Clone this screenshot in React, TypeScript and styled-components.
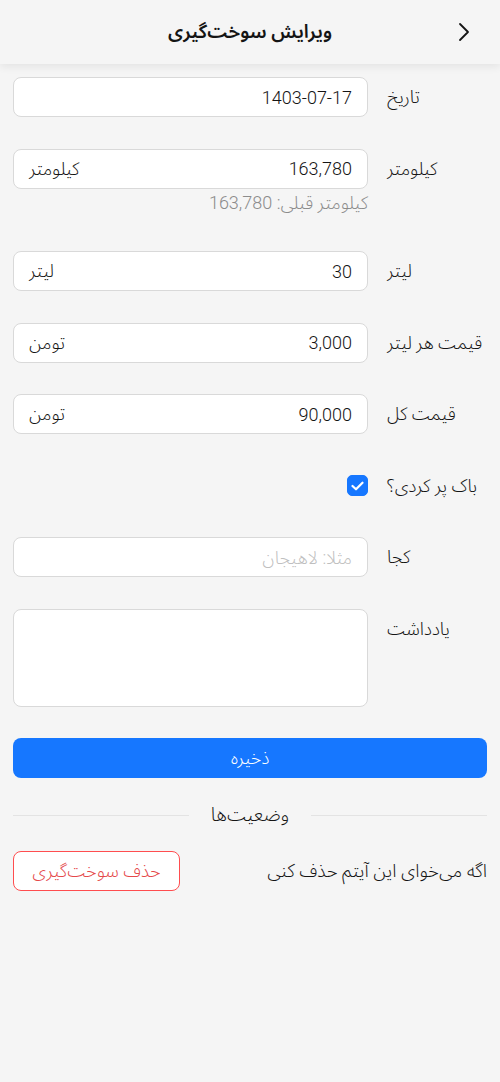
import React, { useState } from 'react'
import styled, { createGlobalStyle } from 'styled-components'

const GlobalStyle = createGlobalStyle`
  body {
    margin: 0;
    background-color: #f5f5f5;
    font-family: Roboto, "Noto Sans Arabic", sans-serif;
    color: #1f1f1f;
  }
  * { box-sizing: border-box; }
`

const Page = styled.div`
	direction: rtl;
	min-height: 1082px;
	background: #f5f5f5;
`

const Header = styled.header`
	height: 64px;
	display: flex;
	align-items: center;
	justify-content: center;
	position: relative;
	background: #f5f5f5;
	box-shadow: 0 3px 8px rgba(0, 0, 0, 0.07);
`

const Title = styled.h1`
	margin: 0;
	font-size: 19px;
	line-height: 28px;
	font-weight: 600;
	color: #141414;
`

const BackButton = styled.button`
	position: absolute;
	right: 22px;
	top: 18px;
	width: 28px;
	height: 28px;
	display: flex;
	align-items: center;
	justify-content: center;
	border: 0;
	padding: 0;
	background: transparent;
	color: #141414;
`

const Form = styled.form`
	padding: 13px 13px 0;
`

const Item = styled.div`
	display: grid;
	grid-template-columns: 100px 1fr;
	column-gap: 19px;
	margin-bottom: 31.5px;
`

const Label = styled.label`
	height: 40px;
	line-height: 40px;
	font-size: 18px;
	font-weight: 300;
	color: #141414;
	text-align: left;
	white-space: nowrap;
`

const Control = styled.div`
	display: flex;
	flex-direction: column;
`

const InputBox = styled.div`
	height: 40px;
	display: flex;
	align-items: center;
	gap: 8px;
	padding: 0 15px;
	background: #fff;
	border: 1px solid #d9d9d9;
	border-radius: 8px;
`

const Input = styled.input`
	flex: 1;
	min-width: 0;
	border: 0;
	outline: none;
	padding: 0;
	background: transparent;
	font-family: Roboto, "Noto Sans Arabic", sans-serif;
	font-size: 18px;
	font-weight: 300;
	color: #141414;
	direction: rtl;
	text-align: right;
	&::placeholder {
		color: #bfbfbf;
		font-weight: 300;
	}
`

const Suffix = styled.span`
	font-size: 18px;
	font-weight: 300;
	line-height: 24px;
	color: #141414;
`

const Hint = styled.div`
	height: 31px;
	line-height: 27px;
	font-size: 18px;
	font-weight: 300;
	color: #8c8c8c;
`

const CheckRow = styled.div`
	height: 40px;
	display: flex;
	align-items: center;
`

const CheckBox = styled.span<{ $on: boolean }>`
	width: 21px;
	height: 21px;
	border-radius: 5px;
	background: ${(p) => (p.$on ? '#1677ff' : '#fff')};
	border: 1px solid ${(p) => (p.$on ? '#1677ff' : '#d9d9d9')};
	display: flex;
	align-items: center;
	justify-content: center;
	cursor: pointer;
`

const TextArea = styled.textarea`
	height: 98px;
	width: 100%;
	resize: none;
	padding: 8px 15px;
	background: #fff;
	border: 1px solid #d9d9d9;
	border-radius: 8px;
	font-family: Roboto, "Noto Sans Arabic", sans-serif;
	font-size: 18px;
	font-weight: 300;
	outline: none;
	display: block;
`

const SaveButton = styled.button`
	width: 100%;
	height: 40px;
	border: 0;
	border-radius: 8px;
	background: #1677ff;
	color: #fff;
	font-family: Roboto, "Noto Sans Arabic", sans-serif;
	font-size: 18px;
	font-weight: 300;
	line-height: 24px;
`

const DividerWrap = styled.div`
	padding: 0 13px;
`

const Divider = styled.div`
	display: flex;
	align-items: center;
	margin: 25px 0 24px;
	font-size: 19px;
	font-weight: 300;
	color: #141414;
	height: 24px;
	&::before,
	&::after {
		content: '';
		flex: 1;
		border-top: 1px solid #e3e3e3;
	}
`

const DividerText = styled.span`
	padding: 0 22px;
	line-height: 24px;
`

const DangerRow = styled.div`
	display: flex;
	align-items: center;
	justify-content: space-between;
	padding: 0 13px;
`

const DangerText = styled.span`
	font-size: 18.5px;
	font-weight: 300;
	line-height: 24px;
	color: #141414;
`

const DangerButton = styled.button`
	height: 40px;
	width: 167px;
	border: 1px solid #ff4d4f;
	border-radius: 8px;
	background: #fff;
	color: #e5484a;
	font-family: Roboto, "Noto Sans Arabic", sans-serif;
	font-size: 18px;
	font-weight: 300;
	line-height: 24px;
`

const fields = [
	{ label: 'تاریخ', value: '1403-07-17' },
	{ label: 'کیلومتر', value: '163,780', suffix: 'کیلومتر', hint: 'کیلومتر قبلی: 163,780' },
	{ label: 'لیتر', value: '30', suffix: 'لیتر' },
	{ label: 'قیمت هر لیتر', value: '3,000', suffix: 'تومن' },
	{ label: 'قیمت کل', value: '90,000', suffix: 'تومن' },
]

const App: React.FC = () => {
	const [full, setFull] = useState(true)

	return (
		<>
			<GlobalStyle />
			<Page>
				<Header>
					<BackButton type='button' aria-label='بازگشت'>
						<svg width='14' height='20' viewBox='0 0 14 20' fill='none'>
							<path d='M3 2 L11 10 L3 18' stroke='#141414' strokeWidth='1.8' strokeLinecap='round' strokeLinejoin='round' />
						</svg>
					</BackButton>
					<Title>ویرایش سوخت‌گیری</Title>
				</Header>
				<Form onSubmit={(e) => e.preventDefault()}>
					{fields.map((f) => (
						<Item key={f.label}>
							<Label>{f.label}</Label>
							<Control>
								<InputBox>
									<Input defaultValue={f.value} />
									{f.suffix && <Suffix>{f.suffix}</Suffix>}
								</InputBox>
								{f.hint && <Hint>{f.hint}</Hint>}
							</Control>
						</Item>
					))}
					<Item>
						<Label>باک پر کردی؟</Label>
						<CheckRow>
							<CheckBox $on={full} onClick={() => setFull(!full)}>
								{full && (
									<svg width='13' height='10' viewBox='0 0 13 10' fill='none'>
										<path d='M1.5 5 L5 8.3 L11.5 1.7' stroke='#fff' strokeWidth='2.2' strokeLinecap='round' strokeLinejoin='round' />
									</svg>
								)}
							</CheckBox>
						</CheckRow>
					</Item>
					<Item>
						<Label>کجا</Label>
						<InputBox>
							<Input placeholder='مثلا: لاهیجان' />
						</InputBox>
					</Item>
					<Item>
						<Label>یادداشت</Label>
						<TextArea />
					</Item>
					<SaveButton type='submit'>ذخیره</SaveButton>
				</Form>
				<DividerWrap>
					<Divider>
						<DividerText>وضعیت‌ها</DividerText>
					</Divider>
				</DividerWrap>
				<DangerRow>
					<DangerText>اگه می‌خوای این آیتم حذف کنی</DangerText>
					<DangerButton type='button'>حذف سوخت‌گیری</DangerButton>
				</DangerRow>
			</Page>
		</>
	)
}

export default App
